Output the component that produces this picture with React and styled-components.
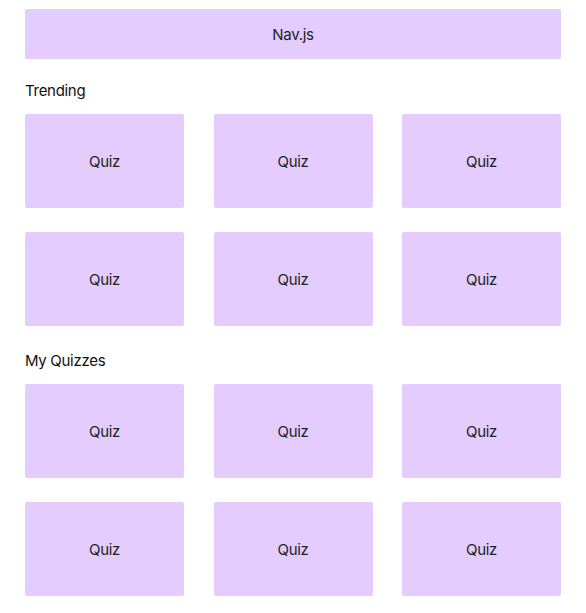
import React from "react";
import styled, { createGlobalStyle } from "styled-components";

const Global = createGlobalStyle`
  html, body { margin: 0; padding: 0; background: #ffffff; }
  body { font-family: Inter, "Noto Sans", sans-serif; color: #1f1f1f; letter-spacing: -0.3px; }
`;

const Page = styled.div`
  padding: 9px 25px 17px;
  display: flex;
  flex-direction: column;
`;

const Nav = styled.div`
  height: 50px;
  background: #e4ccff;
  border-radius: 2px;
  display: flex;
  align-items: center;
  justify-content: center;
  font-size: 15px;
  color: #222;
`;

const Section = styled.section`
  margin-top: ${(p) => p.$top}px;
  display: flex;
  flex-direction: column;
`;

const Heading = styled.h2`
  margin: 0 0 13px;
  font-size: 15px;
  line-height: 20px;
  font-weight: 400;
  color: #111;
`;

const Grid = styled.div`
  display: grid;
  grid-template-columns: repeat(3, 1fr);
  column-gap: 29.5px;
  row-gap: 24px;
`;

const Card = styled.div`
  height: 94px;
  background: #e4ccff;
  border-radius: 2px;
  display: flex;
  align-items: center;
  justify-content: center;
  font-size: 15px;
  color: #222;
`;

const quizzes = [1, 2, 3, 4, 5, 6];

function QuizSection({ title, top }) {
  return (
    <Section $top={top}>
      <Heading>{title}</Heading>
      <Grid>
        {quizzes.map((q) => (
          <Card key={q}>Quiz</Card>
        ))}
      </Grid>
    </Section>
  );
}

export default function App() {
  return (
    <>
      <Global />
      <Page>
        <Nav>Nav.js</Nav>
        <QuizSection title="Trending" top={22} />
        <QuizSection title="My Quizzes" top={25} />
      </Page>
    </>
  );
}
